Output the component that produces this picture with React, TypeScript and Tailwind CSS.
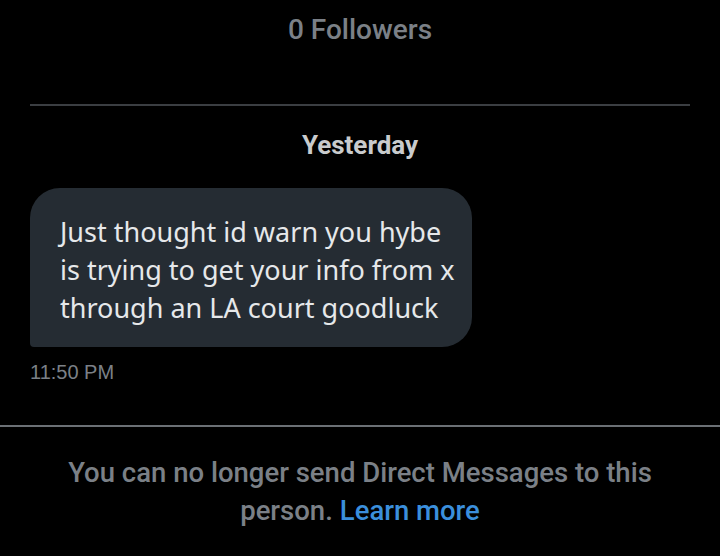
import React from 'react';

export default function App() {
  return (
    <div className="w-[720px] h-[556px] bg-black overflow-hidden flex flex-col" style={{ fontFamily: 'Roboto, "Liberation Sans", sans-serif' }}>
      <div className="px-[30px]">
        <div className="h-[60px] flex items-center justify-center text-[28px] font-medium text-[#7b8087]">0 Followers</div>
        <div className="mt-[44px] h-[2px] bg-[#3b3e42]" />
        <div className="mt-[24px] text-center text-[26px] leading-[30px] font-bold text-[#c9cbcd]">Yesterday</div>
        <div className="mt-[28px] w-[442px] h-[159px] bg-[#252c33] rounded-[30px] rounded-bl-[4px] px-[30px] pt-[25px] text-[27px] leading-[38px] text-[#e6e8ea] whitespace-nowrap" style={{ fontFamily: '"Noto Sans", "Open Sans", sans-serif' }}>
          <p>Just thought id warn you hybe</p>
          <p>is trying to get your info from x</p>
          <p>through an LA court goodluck</p>
        </div>
        <div className="mt-[13px] text-[20px] leading-[24px] text-[#7b8087]" style={{ fontFamily: '"Liberation Sans", Arial, sans-serif' }}>11:50 PM</div>
      </div>
      <div className="mt-[41px] h-[2px] bg-[#6b7075]" />
      <div className="mt-[27px] flex flex-col items-center text-[27.5px] leading-[38px] font-medium text-[#7b8087] whitespace-nowrap">
        <p>You can no longer send Direct Messages to this</p>
        <p className="flex gap-[7px]">
          <span>person.</span>
          <span className="text-[#3b8fdc]">Learn more</span>
        </p>
      </div>
    </div>
  );
}
